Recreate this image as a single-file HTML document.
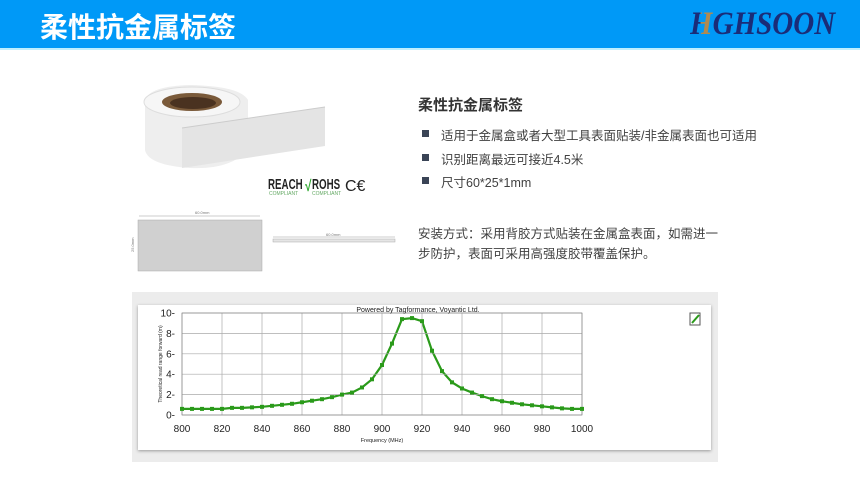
<!DOCTYPE html>
<html><head><meta charset="utf-8"><style>
*{margin:0;padding:0;box-sizing:border-box}
body{width:860px;height:484px;background:#fff;position:relative;overflow:hidden;font-family:"Liberation Sans","Noto Sans CJK SC",sans-serif}
.hdr{position:absolute;left:0;top:0;width:860px;height:50px;background:#0099f7;border-bottom:2px solid #bfefff}
.hdr h1{position:absolute;left:40px;top:6px;color:#fff;font-size:28px;font-weight:bold;letter-spacing:0px}
.logo{position:absolute;left:690px;top:6px;font-family:"Liberation Serif",serif;font-style:italic;font-weight:bold;font-size:33px;color:#1a2c78;transform:scaleX(0.88);transform-origin:left top;white-space:nowrap}
.t{position:absolute;color:#404040;font-size:12.5px;white-space:nowrap}
.b{position:absolute;left:422px;width:7px;height:7px;background:#3a4456}
</style></head><body>
<div class="hdr"><h1>柔性抗金属标签</h1><div class="logo"><span style="background:linear-gradient(90deg,#1a2c78 45%,#b08a50 45%);-webkit-background-clip:text;background-clip:text;color:transparent">H</span>GHSOON</div></div>

<svg style="position:absolute;left:0;top:0" width="860" height="300">
<path d="M145 100 Q150 86 190 85 Q240 86 248 100 L248 150 Q230 170 190 168 Q148 165 145 150 Z" fill="#eeeeee"/>
<ellipse cx="192" cy="102" rx="48" ry="15" fill="#f6f6f6" stroke="#ddd"/>
<ellipse cx="192" cy="102" rx="30" ry="9" fill="#7a5a3a"/>
<ellipse cx="193" cy="103" rx="23" ry="6" fill="#4a3220"/>
<path d="M182 128 L325 107 L325 146 L182 168 Z" fill="#e4e4e4"/>
<path d="M182 128 L325 107" stroke="#ccc"/>
<g font-family="Liberation Sans" font-weight="bold" fill="#222">
<text x="0" y="0" font-size="13" transform="translate(268 189) scale(0.75 1.15)">REACH</text>
<text x="0" y="0" font-size="13" transform="translate(312 189) scale(0.75 1.15)">ROHS</text>
<text x="0" y="0" font-size="13" fill="#3a3" transform="translate(305 191) scale(0.9 1.2)">√</text>
</g>
<text x="269" y="195" font-size="5" fill="#6a6">COMPLIANT</text>
<text x="312" y="195" font-size="5" fill="#6a6">COMPLIANT</text>
<text x="345" y="191" font-size="16" fill="#222">C€</text>
<line x1="139" y1="216" x2="260" y2="216" stroke="#999" stroke-width="0.6"/>
<text x="195" y="214" font-size="4" fill="#777">60.0mm</text>
<rect x="138" y="220" width="124" height="51" fill="#d0d0d0" stroke="#aaa" stroke-width="0.5"/>
<text x="134" y="252" font-size="4" fill="#777" transform="rotate(-90 134 252)">25.0mm</text>
<line x1="273" y1="237" x2="395" y2="237" stroke="#999" stroke-width="0.6"/>
<text x="326" y="236" font-size="4" fill="#777">60.0mm</text>
<rect x="273" y="239" width="122" height="3" fill="#e5e5e5" stroke="#aaa" stroke-width="0.5"/>
</svg>

<div class="t" style="left:418px;top:94px;font-size:15px;font-weight:bold;color:#333">柔性抗金属标签</div>
<div class="b" style="top:130px"></div><div class="t" style="left:441px;top:125px">适用于金属盒或者大型工具表面贴装/非金属表面也可适用</div>
<div class="b" style="top:154px"></div><div class="t" style="left:441px;top:149px">识别距离最远可接近4.5米</div>
<div class="b" style="top:177px"></div><div class="t" style="left:441px;top:172px">尺寸60*25*1mm</div>
<div class="t" style="left:418px;top:223px">安装方式：采用背胶方式贴装在金属盒表面，如需进一</div>
<div class="t" style="left:418px;top:243px">步防护，表面可采用高强度胶带覆盖保护。</div>

<div style="position:absolute;left:132px;top:292px;width:586px;height:170px;background:#ececec"></div>
<div style="position:absolute;left:138px;top:305px;width:573px;height:145px;background:#fff;box-shadow:0 1px 3px #999"></div>
<svg id="ch" style="position:absolute;left:0;top:0" width="860" height="484"></svg>
<script>
var s='',L=182,R=582,T=313,B=415;
function X(f){return L+(f-800)/200*(R-L)}function Y(v){return B-v/10*(B-T)}
for(var f=800;f<=1000;f+=20){s+='<line x1="'+X(f)+'" y1="'+T+'" x2="'+X(f)+'" y2="'+B+'" stroke="#aaa" stroke-width="0.7"/>';s+='<text x="'+X(f)+'" y="432" font-size="10" text-anchor="middle" fill="#222" font-family="Liberation Sans">'+f+'</text>'}
for(var v=0;v<=10;v+=2){s+='<line x1="'+L+'" y1="'+Y(v)+'" x2="'+R+'" y2="'+Y(v)+'" stroke="#aaa" stroke-width="0.7"/>';s+='<text x="175" y="'+(Y(v)+3.5)+'" font-size="10" text-anchor="end" fill="#222" font-family="Liberation Sans">'+v+'-</text>'}
s+='<rect x="'+L+'" y="'+T+'" width="'+(R-L)+'" height="'+(B-T)+'" fill="none" stroke="#888" stroke-width="0.7"/>';
var d=[0.6,0.6,0.6,0.6,0.6,0.7,0.7,0.75,0.8,0.9,1.0,1.1,1.25,1.4,1.55,1.75,2.0,2.2,2.7,3.5,4.9,7.0,9.4,9.5,9.2,6.3,4.3,3.2,2.6,2.2,1.85,1.55,1.35,1.2,1.05,0.95,0.85,0.75,0.65,0.6,0.6];
var p='';for(var i=0;i<d.length;i++){var x=X(800+5*i),y=Y(d[i]);p+=(i?'L':'M')+x+' '+y;s+='<rect x="'+(x-2)+'" y="'+(y-2)+'" width="4" height="4" fill="#2a9a1a"/>'}
s='<path d="'+p+'" fill="none" stroke="#2a9a1a" stroke-width="2.2"/>'+s;
s+='<text x="418" y="312" font-size="7" text-anchor="middle" fill="#222" font-family="Liberation Sans">Powered by Tagformance, Voyantic Ltd.</text>';
s+='<text x="382" y="442" font-size="5.5" text-anchor="middle" fill="#222" font-family="Liberation Sans">Frequency (MHz)</text>';
s+='<text x="0" y="0" font-size="5" text-anchor="middle" fill="#222" font-family="Liberation Sans" transform="translate(162 364) rotate(-90)">Theoretical read range forward (m)</text>';
s+='<rect x="690" y="313" width="10" height="12" fill="#fff" stroke="#555"/><path d="M692 323 L699 315" stroke="#2a9a1a" stroke-width="2"/>';
document.getElementById('ch').innerHTML=s;
</script>
</body></html>
